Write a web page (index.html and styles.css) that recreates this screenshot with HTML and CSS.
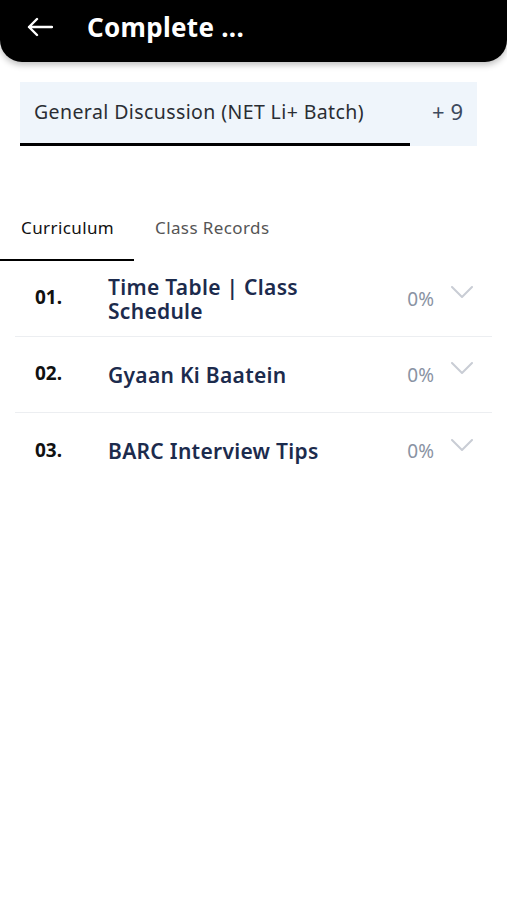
FILE: index.html
```html
<!DOCTYPE html>
<html lang="en">
<head>
    <meta charset="UTF-8">
    <meta name="viewport" content="width=device-width, initial-scale=1.0">
    <title>Complete ...</title>
    <link rel="stylesheet" href="styles.css">
</head>
<body>
    <header class="topbar">
        <svg class="back" width="26" height="20" viewBox="0 0 26 20" fill="none" stroke="#fff" stroke-width="2.4" stroke-linecap="round" stroke-linejoin="round">
            <path d="M25 10H2M10 2L2 10l8 8"/>
        </svg>
        <h1>Complete ...</h1>
    </header>

    <div class="batch">
        <div class="batch-name">General Discussion (NET Li+ Batch)</div>
        <div class="batch-more">+ 9</div>
    </div>

    <nav class="tabs">
        <div class="tab active">Curriculum</div>
        <div class="tab">Class Records</div>
    </nav>

    <ul class="chapters">
        <li class="chapter">
            <span class="num">01.</span>
            <span class="title">Time Table | Class Schedule</span>
            <span class="pct">0%</span>
            <svg class="chev" width="22" height="13" viewBox="0 0 22 13" fill="none" stroke="#c9cdd5" stroke-width="2" stroke-linecap="round" stroke-linejoin="round"><path d="M1 1l10 10L21 1"/></svg>
        </li>
        <li class="chapter">
            <span class="num">02.</span>
            <span class="title">Gyaan Ki Baatein</span>
            <span class="pct">0%</span>
            <svg class="chev" width="22" height="13" viewBox="0 0 22 13" fill="none" stroke="#c9cdd5" stroke-width="2" stroke-linecap="round" stroke-linejoin="round"><path d="M1 1l10 10L21 1"/></svg>
        </li>
        <li class="chapter">
            <span class="num">03.</span>
            <span class="title">BARC Interview Tips</span>
            <span class="pct">0%</span>
            <svg class="chev" width="22" height="13" viewBox="0 0 22 13" fill="none" stroke="#c9cdd5" stroke-width="2" stroke-linecap="round" stroke-linejoin="round"><path d="M1 1l10 10L21 1"/></svg>
        </li>
    </ul>
</body>
</html>
```

FILE: styles.css
```css
body {
    margin: 0;
    font-family: "Noto Sans", "Open Sans", sans-serif;
    background-color: #fff;
    color: #222;
}

.topbar {
    background-color: #000;
    height: 62px;
    border-radius: 0 0 22px 22px;
    box-shadow: 0 3px 6px rgba(0, 0, 0, 0.25);
    display: flex;
    align-items: center;
    padding: 0 27px 8px;
    box-sizing: border-box;
}

.back {
    margin-right: 34px;
}

.topbar h1 {
    margin: 0;
    color: #fff;
    font-size: 26px;
    font-weight: 700;
    letter-spacing: 0.3px;
}

.batch {
    margin: 20px 30px 0 20px;
    height: 64px;
    background-color: #eff5fb;
    display: flex;
    align-items: center;
    justify-content: space-between;
    position: relative;
}

.batch::after {
    content: "";
    position: absolute;
    left: 0;
    bottom: 0;
    width: 390px;
    height: 3px;
    background-color: #000;
}

.batch-name {
    padding-left: 14px;
    padding-bottom: 6px;
    font-size: 19.5px;
    letter-spacing: 0.4px;
    color: #2a2d33;
}

.batch-more {
    padding-right: 14px;
    padding-bottom: 6px;
    font-size: 22px;
    color: #3d4a5e;
}

.tabs {
    display: flex;
    margin-top: 70px;
}

.tab {
    font-size: 17px;
    letter-spacing: 0.4px;
    line-height: 24px;
    color: #555;
    padding: 0 0 19px 21px;
    white-space: nowrap;
}

.tab.active {
    width: 113px;
    color: #111;
    border-bottom: 2px solid #000;
}

.chapters {
    list-style: none;
    margin: 0;
    padding: 0 15px;
}

.chapter {
    display: flex;
    align-items: center;
    height: 76px;
    box-sizing: border-box;
    border-bottom: 1px solid #eceef1;
}

.chapter:last-child {
    border-bottom: none;
}

.num {
    width: 73px;
    padding-left: 20px;
    font-size: 19px;
    font-weight: 700;
    color: #111;
    line-height: 24px;
    margin-bottom: 3px;
}

.title {
    width: 240px;
    font-size: 21px;
    font-weight: 600;
    letter-spacing: 0.3px;
    color: #1c2b4d;
    line-height: 24px;
}

.pct {
    margin-left: auto;
    font-size: 19px;
    color: #8a93a3;
    line-height: 24px;
}

.chev {
    margin: 0 19px 12px 17px;
}
```
